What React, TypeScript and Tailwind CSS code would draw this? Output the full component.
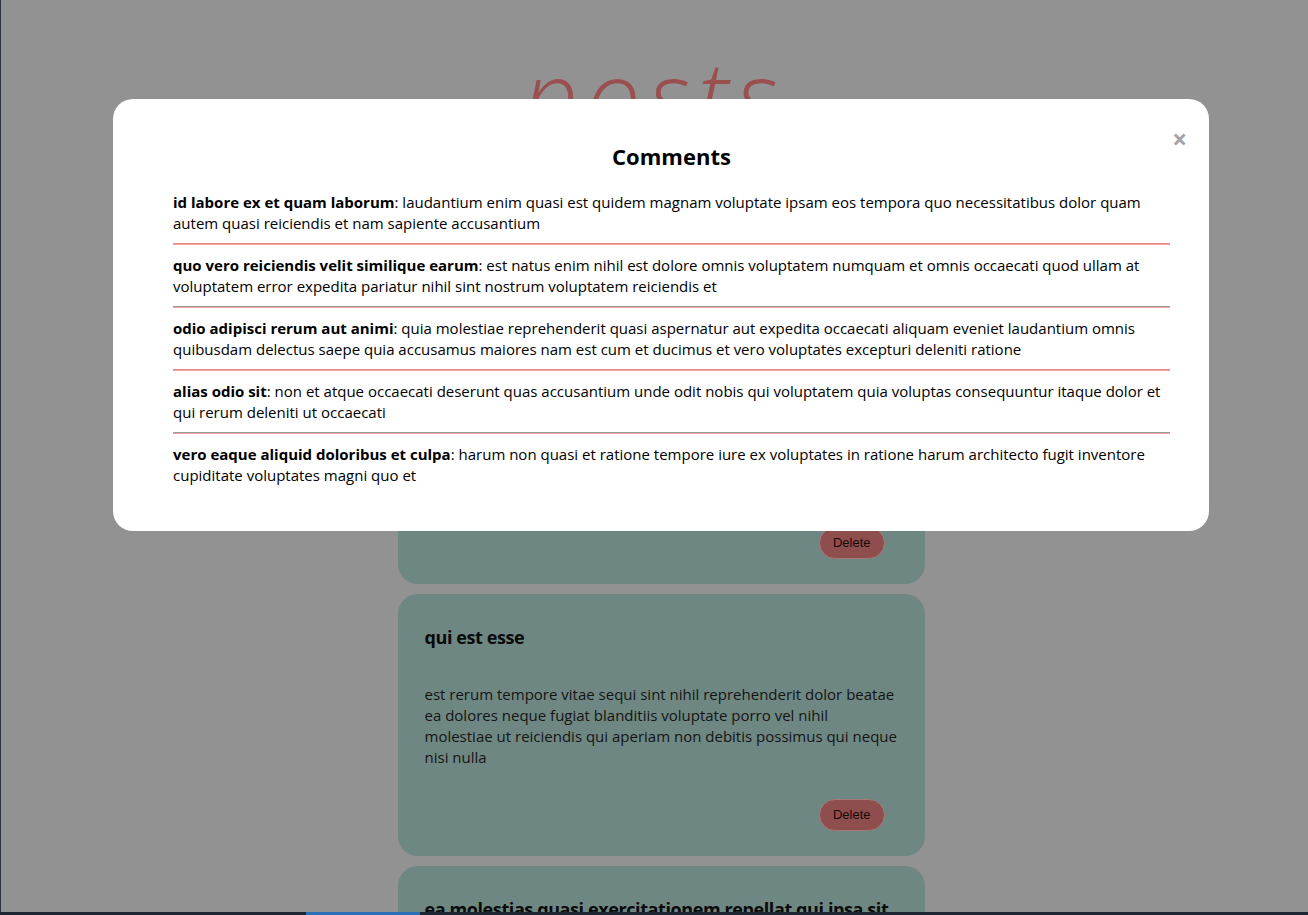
import React from 'react';

interface Post {
  id: number;
  title: string;
  body: string;
}

interface Comment {
  id: number;
  name: string;
  body: string;
}

const posts: Post[] = [
  {
    id: 1,
    title: 'sunt aut facere repellat provident occaecati excepturi optio reprehenderit',
    body: 'quia et suscipit suscipit recusandae consequuntur expedita et cum reprehenderit molestiae ut ut quas totam nostrum rerum est autem sunt rem eveniet architecto',
  },
  {
    id: 2,
    title: 'qui est esse',
    body: 'est rerum tempore vitae sequi sint nihil reprehenderit dolor beatae ea dolores neque fugiat blanditiis voluptate porro vel nihil molestiae ut reiciendis qui aperiam non debitis possimus qui neque nisi nulla',
  },
  {
    id: 3,
    title: 'ea molestias quasi exercitationem repellat qui ipsa sit aut',
    body: 'et iusto sed quo iure voluptatem occaecati omnis eligendi aut ad voluptatem doloribus vel accusantium quis pariatur molestiae porro eius odio et labore et velit aut',
  },
];

const comments: Comment[] = [
  {
    id: 1,
    name: 'id labore ex et quam laborum',
    body: 'laudantium enim quasi est quidem magnam voluptate ipsam eos tempora quo necessitatibus dolor quam autem quasi reiciendis et nam sapiente accusantium',
  },
  {
    id: 2,
    name: 'quo vero reiciendis velit similique earum',
    body: 'est natus enim nihil est dolore omnis voluptatem numquam et omnis occaecati quod ullam at voluptatem error expedita pariatur nihil sint nostrum voluptatem reiciendis et',
  },
  {
    id: 3,
    name: 'odio adipisci rerum aut animi',
    body: 'quia molestiae reprehenderit quasi aspernatur aut expedita occaecati aliquam eveniet laudantium omnis quibusdam delectus saepe quia accusamus maiores nam est cum et ducimus et vero voluptates excepturi deleniti ratione',
  },
  {
    id: 4,
    name: 'alias odio sit',
    body: 'non et atque occaecati deserunt quas accusantium unde odit nobis qui voluptatem quia voluptas consequuntur itaque dolor et qui rerum deleniti ut occaecati',
  },
  {
    id: 5,
    name: 'vero eaque aliquid doloribus et culpa',
    body: 'harum non quasi et ratione tempore iure ex voluptates in ratione harum architecto fugit inventore cupiditate voluptates magni quo et',
  },
];

function PostCard({ post }: { post: Post }) {
  return (
    <div className="w-[527px] rounded-[20px] bg-[#6f8782] px-[27px] pt-[31px] pb-[25px]">
      <h2 className="text-[18px] leading-[24px] font-bold tracking-[-0.4px] text-[#0a0a0a]">{post.title}</h2>
      <p className="mt-[35px] text-[15px] leading-[21px] text-[#141414]">{post.body}</p>
      <div className="flex justify-end mt-[31px] pr-[13px]">
        <button className="h-[32px] px-[13px] rounded-full bg-[#8f4e4e] border border-[#a87878] font-['Liberation_Sans',sans-serif] text-[13px] text-[#1a0808]">
          Delete
        </button>
      </div>
    </div>
  );
}

export default function App() {
  return (
    <div className="min-h-screen bg-[#929292] font-['Open_Sans',sans-serif] overflow-hidden pl-[14px]">
      {/* page behind the dialog */}
      <div className="flex flex-col items-center">
        <h1 className="mt-[34px] pr-[14px] font-['Open_Sans',sans-serif] italic font-light text-[97px] leading-[120px] tracking-[0.08em] text-[#9b5050]">
          posts
        </h1>
        {/* add-post form sits under the modal */}
        <div className="h-[165px]" />
        <div className="flex flex-col gap-[10px]">
          {posts.map((post) => (
            <PostCard key={post.id} post={post} />
          ))}
        </div>
      </div>

      {/* window edges */}
      <div className="fixed top-0 bottom-0 left-0 w-px bg-[#2d3240]" />
      <div className="fixed left-0 right-0 bottom-0 h-[3px] bg-[#1d2633] flex">
        <div className="ml-[306px] w-[114px] bg-[#2a6fb8]" />
      </div>

      {/* comments dialog */}
      <div className="fixed inset-0 flex justify-center pt-[99px] pl-[14px]">
        <div className="relative h-fit w-[1096px] rounded-[20px] bg-white pl-[60px] pr-[39px] pt-[42px] pb-[36px] text-black">
          <button className="absolute top-[25px] right-[22px] text-[26px] leading-[30px] font-bold text-[#a3a3a3]">
            ×
          </button>
          <h2 className="mb-[11px] text-center text-[22px] leading-[30px] font-bold">Comments</h2>
          <div className="flex flex-col">
            {comments.map((c, i) => (
              <div key={c.id}>
                <p className="pt-[10px] pb-[9px] text-[15px] leading-[21px]">
                  <span className="font-bold">{c.name}</span>: {c.body}
                </p>
                {i < comments.length - 1 && (
                  <div className="flex flex-col">
                    <div className={i % 2 === 0 ? 'h-px bg-[#e48888]' : 'h-px bg-[#9c9c9c]'} />
                    <div className="h-px bg-[#f2a0a0]" />
                  </div>
                )}
              </div>
            ))}
          </div>
        </div>
      </div>
    </div>
  );
}
